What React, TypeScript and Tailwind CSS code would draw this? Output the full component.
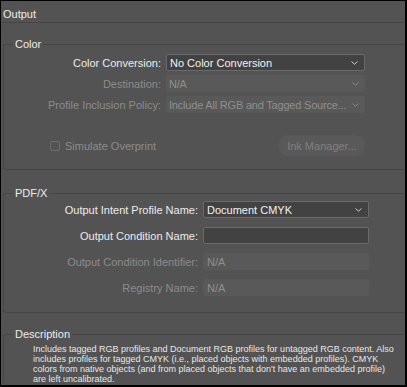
import React from 'react';

const font = { fontFamily: '"Liberation Sans", Arial, sans-serif' };

const Chevron: React.FC<{ dim?: boolean }> = ({ dim }) => (
  <svg width="7" height="4" viewBox="0 0 7 4" className="shrink-0">
    <polyline
      points="0.5,0.5 3.5,3.2 6.5,0.5"
      fill="none"
      stroke={dim ? '#8a8a8a' : '#cfcfcf'}
      strokeWidth="1"
    />
  </svg>
);

interface FieldProps {
  value: string;
  kind: 'select' | 'select-off' | 'input' | 'input-off';
  width: string;
}

const Field: React.FC<FieldProps> = ({ value, kind, width }) => {
  if (kind === 'select') {
    return (
      <div className={`${width} h-[17px] flex items-center justify-between pl-[3px] pr-[6px] bg-[#424242] border border-[#6a6a6a] rounded-[2px] text-[#f2f2f2]`}>
        <span>{value}</span>
        <Chevron />
      </div>
    );
  }
  if (kind === 'select-off') {
    return (
      <div className={`${width} h-[17px] flex items-center justify-between pl-[3px] pr-[6px] bg-[#595959] rounded-[2px] text-[#8f8f8f]`}>
        <span className="whitespace-nowrap tracking-[-0.2px]">{value}</span>
        <Chevron dim />
      </div>
    );
  }
  if (kind === 'input') {
    return <div className={`${width} h-[17px] bg-[#424242] border border-[#6a6a6a] rounded-[2px]`} />;
  }
  return (
    <div className={`${width} h-[17px] flex items-center pl-[4px] bg-[#595959] rounded-[2px] text-[#8f8f8f]`}>
      {value}
    </div>
  );
};

interface RowProps {
  label: string;
  labelWidth: string;
  dim?: boolean;
  children: React.ReactNode;
}

const Row: React.FC<RowProps> = ({ label, labelWidth, dim, children }) => (
  <div className="flex items-center">
    <div className={`${labelWidth} text-right pr-[5px] whitespace-nowrap ${dim ? 'text-[#8c8c8c]' : 'text-[#ececec]'}`}>
      {label}
    </div>
    {children}
  </div>
);

const Group: React.FC<{ title: string; className?: string; children: React.ReactNode }> = ({ title, className, children }) => (
  <fieldset className={`ml-[2px] border-l border-t border-[#464646] rounded-l-[3px] ${className ?? ''}`}>
    <legend className="ml-[9px] px-[2px] text-[#ececec] leading-[14px]">{title}</legend>
    {children}
  </fieldset>
);

export default function App() {
  return (
    <div className="w-[407px] h-[387px] bg-black pt-px pl-px pr-[2px] pb-[2px]" style={font}>
      <div className="w-full h-full bg-[#535353] overflow-hidden text-[11px] leading-[14px]">
        <div className="pt-[6px] pb-[1px] pl-[2px] border-b border-[#464646] text-[#ececec]">Output</div>

        <Group title="Color" className="mt-[14px] border-b">
          <div className="flex flex-col gap-[4px] pt-[3px]">
            <Row label="Color Conversion:" labelWidth="w-[162px]">
              <Field kind="select" value="No Color Conversion" width="w-[199px]" />
            </Row>
            <Row label="Destination:" labelWidth="w-[162px]" dim>
              <Field kind="select-off" value="N/A" width="w-[199px]" />
            </Row>
            <Row label="Profile Inclusion Policy:" labelWidth="w-[162px]" dim>
              <Field kind="select-off" value="Include All RGB and Tagged Source..." width="w-[199px]" />
            </Row>
          </div>
          <div className="flex items-center justify-between mt-[22px] mb-[13px] pl-[46px] pr-[40px]">
            <label className="flex items-center gap-[5px] text-[#8c8c8c]">
              <span className="w-[10px] h-[10px] border border-[#6e6e6e] rounded-[2px]" />
              Simulate Overprint
            </label>
            <div className="w-[86px] h-[21px] flex items-center justify-center rounded-[9px] bg-[#595959] text-[#808080]">
              Ink Manager...
            </div>
          </div>
        </Group>

        <Group title="PDF/X" className="mt-[16px] border-b">
          <div className="flex flex-col gap-[9px] pt-[1px] pb-[16px]">
            <Row label="Output Intent Profile Name:" labelWidth="w-[199px]">
              <Field kind="select" value="Document CMYK" width="w-[166px]" />
            </Row>
            <Row label="Output Condition Name:" labelWidth="w-[199px]">
              <Field kind="input" value="" width="w-[166px]" />
            </Row>
            <Row label="Output Condition Identifier:" labelWidth="w-[199px]" dim>
              <Field kind="input-off" value="N/A" width="w-[166px]" />
            </Row>
            <Row label="Registry Name:" labelWidth="w-[199px]" dim>
              <Field kind="input-off" value="N/A" width="w-[166px]" />
            </Row>
          </div>
        </Group>

        <Group title="Description" className="mt-[14px]">
          <p className="pl-[29px] pt-[3px] text-[9px] leading-[10px] text-[#e8e8e8] whitespace-nowrap">
            Includes tagged RGB profiles and Document RGB profiles for untagged RGB content. Also
            <br />
            includes profiles for tagged CMYK (i.e., placed objects with embedded profiles). CMYK
            <br />
            colors from native objects (and from placed objects that don't have an embedded profile)
            <br />
            are left uncalibrated.
          </p>
        </Group>
      </div>
    </div>
  );
}
